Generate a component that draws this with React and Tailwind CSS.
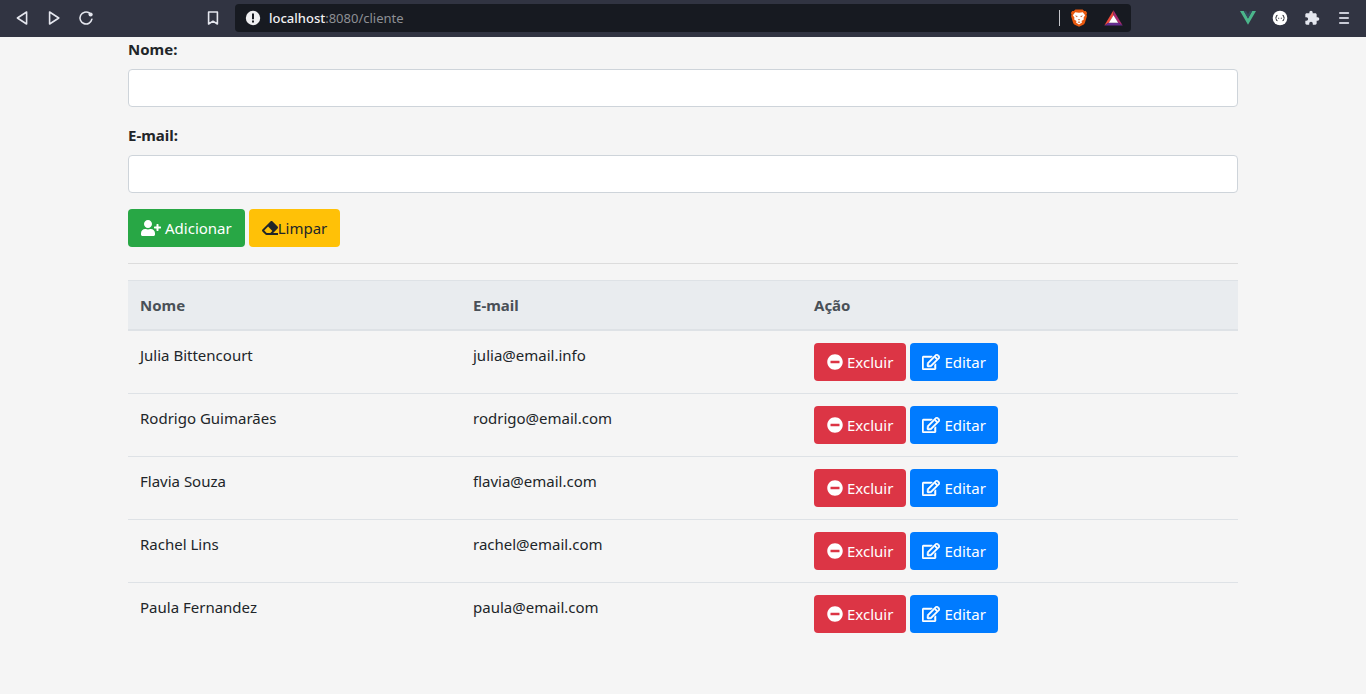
import { useState } from "react";
import { FaUserPlus, FaEraser, FaMinusCircle, FaRegEdit } from "react-icons/fa";

const clients = [
  { name: "Julia Bittencourt", email: "julia@email.info" },
  { name: "Rodrigo Guimarães", email: "rodrigo@email.com" },
  { name: "Flavia Souza", email: "flavia@email.com" },
  { name: "Rachel Lins", email: "rachel@email.com" },
  { name: "Paula Fernandez", email: "paula@email.com" },
];

function BarButton({ label, children }) {
  return (
    <button
      type="button"
      aria-label={label}
      className="flex h-8 w-8 items-center justify-center text-[#e4e6ee]"
    >
      {children}
    </button>
  );
}

function BrowserBar() {
  return (
    <header className="flex h-[37px] items-start bg-[#313442] font-['Noto_Sans',sans-serif]">
      <nav className="flex w-[235px] shrink-0 justify-between px-1.5 pt-0.5">
        <div className="flex">
          <BarButton label="Back">
            <svg width="16" height="16" viewBox="0 0 16 16" fill="none" stroke="currentColor" strokeWidth="1.6" strokeLinejoin="round">
              <path d="M12.6 2v12L3.4 8z" />
            </svg>
          </BarButton>
          <BarButton label="Forward">
            <svg width="16" height="16" viewBox="0 0 16 16" fill="none" stroke="currentColor" strokeWidth="1.6" strokeLinejoin="round">
              <path d="M3.6 2v12L12.8 8z" />
            </svg>
          </BarButton>
          <BarButton label="Reload">
            <svg width="16" height="16" viewBox="0 0 16 16" fill="none" stroke="currentColor" strokeWidth="1.6" strokeLinecap="round">
              <path d="M13.9 9.2A6 6 0 1 1 11.4 3" />
              <circle cx="12.6" cy="4.5" r="2.1" fill="currentColor" stroke="none" />
            </svg>
          </BarButton>
        </div>
        <BarButton label="Bookmark">
          <svg width="16" height="16" viewBox="0 0 16 16" fill="none" stroke="currentColor" strokeWidth="1.6" strokeLinejoin="round">
            <path d="M3.6 2h8.8v12L8 11.2 3.6 14z" />
          </svg>
        </BarButton>
      </nav>
      <div className="mt-1 flex h-7 min-w-0 flex-1 items-center rounded bg-[#171a21] pl-2.5 pr-2">
        <svg width="16" height="16" viewBox="0 0 16 16" className="shrink-0">
          <circle cx="8" cy="8" r="7.2" fill="#eeeef0" />
          <path d="M7 3.6h2v5.6H7zM7 10.4h2v2H7z" fill="#17191f" />
        </svg>
        <p className="ml-2 flex-1 truncate text-[13px] leading-7 text-[#8d8f94]">
          <span className="font-medium text-[#f1f1f3]">localhost</span>:8080/cliente
        </p>
        <span className="h-4 w-px bg-[#c5c6cb]" />
        <button type="button" aria-label="Brave Shields" className="ml-2.5">
          <svg width="18" height="20" viewBox="0 0 18 20">
            <path d="M5.4 1.4h7.2l1.5 1.7 1.7-.2 1.3 2.2-.6 1.5.4 1.7-2 6.4c-.3.9-.9 1.6-1.6 2.1L9 18.8l-4.3-2c-.7-.5-1.3-1.2-1.6-2.1l-2-6.4.4-1.7L.9 5.1l1.3-2.2 1.7.2z" fill="#e8590f" />
            <path d="M5.2 4.2 9 4.8l3.8-.6 2.3 3-1.5 2.4.2 2-2.3 1.3.5 1.5L9 16.6l-3-2.2.5-1.5-2.3-1.3.2-2-1.5-2.4z" fill="#fff" />
            <path d="M4.9 7.4l2.7.7-.6 1.1zM13.1 7.4l-2.7.7.6 1.1zM7.7 11.2h2.6L9 12.4zM7.5 14 9 13.4l1.5.6L9 15z" fill="#c9571e" />
          </svg>
        </button>
        <button type="button" aria-label="Brave Rewards" className="ml-4">
          <svg width="19" height="16" viewBox="0 0 18 16" preserveAspectRatio="none">
            <path d="M9 .2 9 5.6 4.8 12.6.3 15.4z" fill="#f04a3a" />
            <path d="M9 .2 17.7 15.4 13.2 12.6 9 5.6z" fill="#a82a6f" />
            <path d="M.3 15.4 4.8 12.6h8.4l4.5 2.8z" fill="#652d91" />
            <path d="M9 5.2 13.4 12.7H4.6z" fill="#fff" />
          </svg>
        </button>
      </div>
      <div className="flex w-[235px] shrink-0 justify-end px-1.5 pt-0.5">
        <BarButton label="Vue devtools">
          <svg width="16" height="14" viewBox="0 0 16 14">
            <path d="M0 0h3.8L8 7.4 12.2 0H16L8 13.8z" fill="#4bb58b" />
            <path d="M3.8 0h2.3L8 3.3 9.9 0h2.3L8 7.4z" fill="#34495e" />
          </svg>
        </BarButton>
        <BarButton label="JSON viewer">
          <svg width="16" height="16" viewBox="0 0 16 16" fill="none" stroke="#3d3e44" strokeWidth="1.1">
            <circle cx="8" cy="8" r="7.3" fill="#fff" stroke="none" />
            <path d="M5.5 5.4c-1 0-1.2.4-1.2 1.2 0 .9-.1 1.4-1 1.4.9 0 1 .5 1 1.4 0 .8.2 1.2 1.2 1.2M10.5 5.4c1 0 1.2.4 1.2 1.2 0 .9.1 1.4 1 1.4-.9 0-1 .5-1 1.4 0 .8-.2 1.2-1.2 1.2" />
            <path d="M6.1 8.3h1.1M8.8 8.3h1.1" />
          </svg>
        </BarButton>
        <BarButton label="Extensions">
          <svg width="16" height="16" viewBox="0 0 24 24" fill="currentColor">
            <path d="M20.5 11H19V7c0-1.1-.9-2-2-2h-4V3.5a2.5 2.5 0 0 0-5 0V5H4c-1.1 0-2 .9-2 2v3.8h1.5a2.7 2.7 0 0 1 0 5.4H2V20c0 1.1.9 2 2 2h3.8v-1.5a2.7 2.7 0 0 1 5.4 0V22H17c1.1 0 2-.9 2-2v-4h1.5a2.5 2.5 0 0 0 0-5z" />
          </svg>
        </BarButton>
        <BarButton label="Menu">
          <svg width="16" height="16" viewBox="0 0 16 16" stroke="#c9cbd6" strokeWidth="1.8" strokeLinecap="round">
            <path d="M3.9 3h8.4M3.9 8h8.2M3.9 13h8.4" />
          </svg>
        </BarButton>
      </div>
    </header>
  );
}

function Field({ id, label, type, value, onChange }) {
  return (
    <div className="mb-4">
      <label htmlFor={id} className="mb-2 block font-bold">
        {label}
      </label>
      <input
        id={id}
        type={type}
        value={value}
        onChange={(e) => onChange(e.target.value)}
        className="block h-[38px] w-full rounded border border-[#ced4da] bg-white px-3 text-[#495057]"
      />
    </div>
  );
}

function Button({ className, ...props }) {
  return (
    <button
      type="button"
      className={`inline-flex h-[38px] items-center justify-center rounded ${className}`}
      {...props}
    />
  );
}

export default function App() {
  const [name, setName] = useState("");
  const [email, setEmail] = useState("");

  return (
    <div className="min-h-screen bg-[#f5f5f5] font-['Noto_Sans',sans-serif] text-[15px] leading-6 text-[#212529]">
      <BrowserBar />
      <main className="mx-auto max-w-[1140px] px-[15px]">
        <form>
          <Field id="name" label="Nome:" type="text" value={name} onChange={setName} />
          <Field id="email" label="E-mail:" type="email" value={email} onChange={setEmail} />
          <div className="flex gap-1">
            <Button className="gap-1 bg-[#28a745] px-[13px] text-white">
              <FaUserPlus className="h-4 w-5" />
              Adicionar
            </Button>
            <Button
              className="bg-[#ffc107] px-[13px]"
              onClick={() => {
                setName("");
                setEmail("");
              }}
            >
              <FaEraser className="size-4" />
              Limpar
            </Button>
          </div>
        </form>
        <hr className="my-4 border-black/10" />
        <table className="w-full table-fixed border-separate border-spacing-0 text-left">
          <thead className="bg-[#e9ecef] text-[#495057]">
            <tr>
              <th className="w-[30%] border-t border-b-2 border-[#dee2e6] p-3">Nome</th>
              <th className="w-[341px] border-t border-b-2 border-[#dee2e6] p-3">E-mail</th>
              <th className="border-t border-b-2 border-[#dee2e6] p-3">Ação</th>
            </tr>
          </thead>
          <tbody className="[&>tr+tr>td]:border-t [&>tr+tr>td]:border-[#dee2e6]">
            {clients.map((client) => (
              <tr key={client.email} className="align-top">
                <td className="p-3">{client.name}</td>
                <td className="p-3">{client.email}</td>
                <td className="p-3">
                  <div className="flex gap-1">
                    <Button className="gap-1 bg-[#dc3545] px-[13px] text-white">
                      <FaMinusCircle className="size-4" />
                      Excluir
                    </Button>
                    <Button className="gap-1 bg-[#007bff] px-3 text-white">
                      <FaRegEdit className="h-4 w-[18px] stroke-current stroke-[16]" />
                      Editar
                    </Button>
                  </div>
                </td>
              </tr>
            ))}
          </tbody>
        </table>
      </main>
    </div>
  );
}
